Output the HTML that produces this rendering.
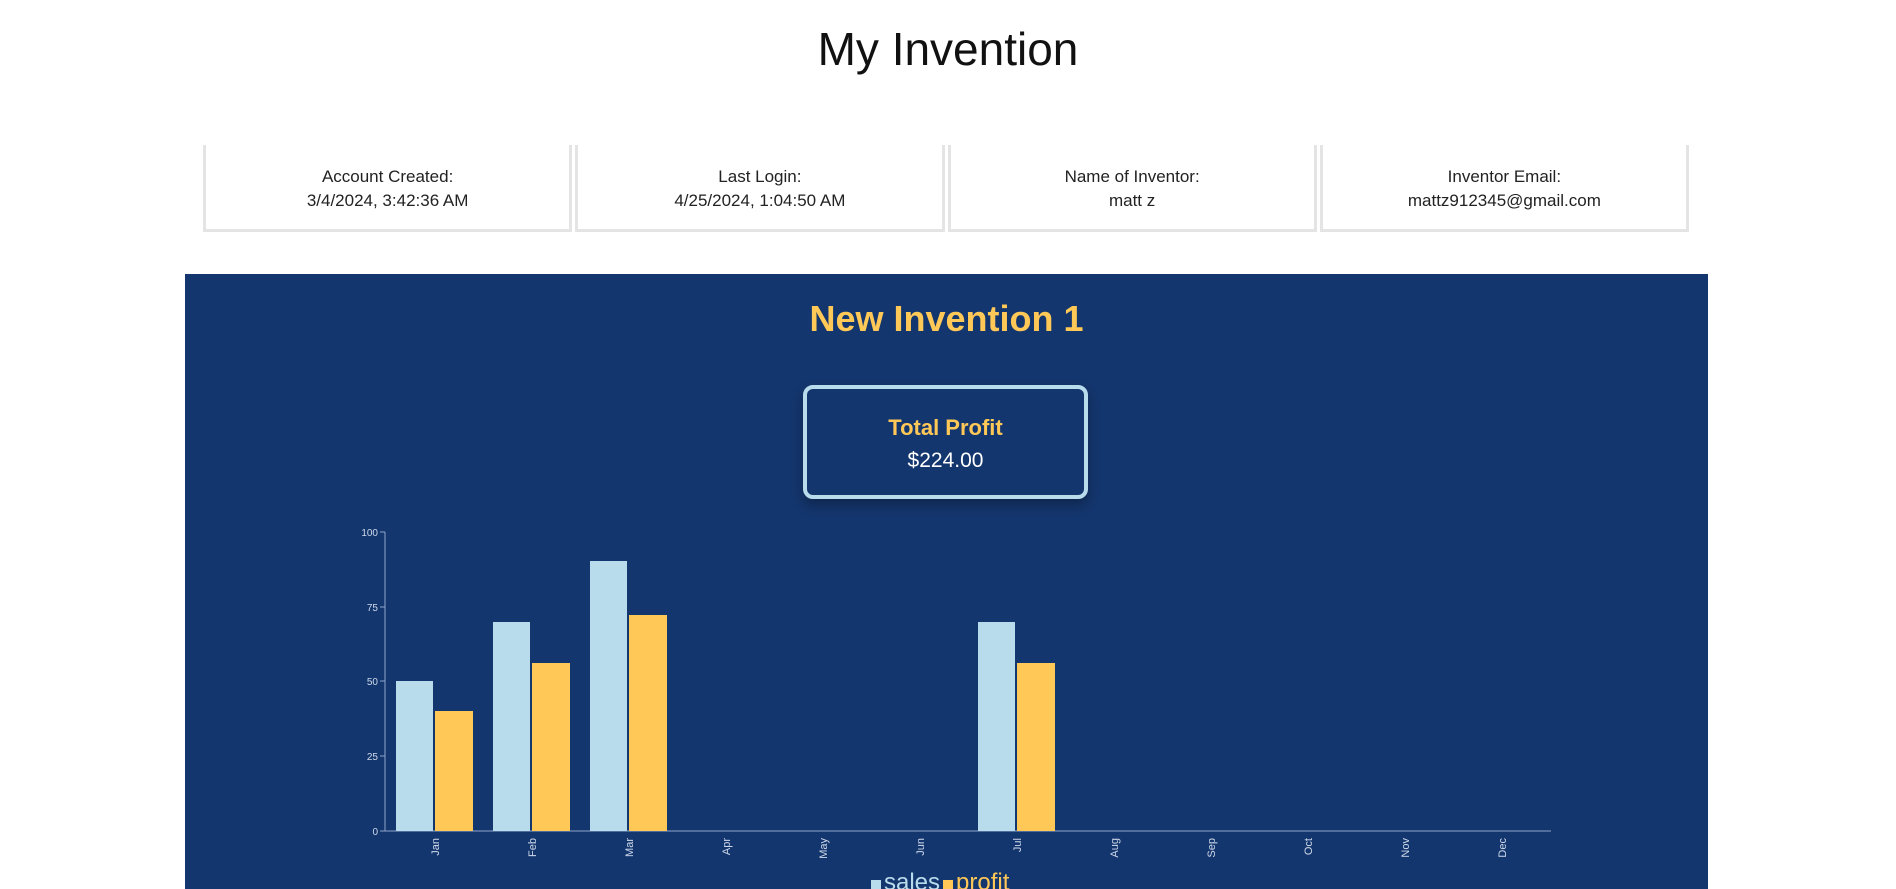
<!DOCTYPE html>
<html><head><style>
body{margin:0;width:1896px;height:889px;overflow:hidden;background:#fff;font-family:"Liberation Sans",sans-serif;position:relative}
h1{position:absolute;top:22px;left:0;width:1896px;text-align:center;font-weight:400;font-size:46px;margin:0;color:#111}
.cards{position:absolute;left:203px;top:145px;width:1486px;height:87px;display:flex}
.card{flex:1;border:3px solid #e4e4e4;border-top:none;text-align:center;font-size:17px;color:#222;padding-top:20px;line-height:24px;box-sizing:border-box;margin-right:3px}
.card:last-child{margin-right:0}
.panel{position:absolute;left:185px;top:274px;width:1523px;height:615px;background:#14366e}
.t{position:absolute;top:24px;width:100%;text-align:center;color:#ffc857;font-weight:bold;font-size:36px}
.box{position:absolute;left:618px;top:111px;width:285px;height:114px;border:4px solid #b8dcec;border-radius:10px;box-sizing:border-box;text-align:center;box-shadow:0 6px 12px rgba(0,0,0,.3)}
.box .a{color:#ffc857;font-weight:bold;font-size:22px;margin-top:26px}
.box .b{color:#fff;font-size:21px;margin-top:8px}
svg{position:absolute;left:0;top:0}
</style></head><body>
<h1>My Invention</h1>
<div class="cards">
<div class="card">Account Created:<br>3/4/2024, 3:42:36 AM</div>
<div class="card">Last Login:<br>4/25/2024, 1:04:50 AM</div>
<div class="card">Name of Inventor:<br>matt z</div>
<div class="card">Inventor Email:<br>mattz912345@gmail.com</div>
</div>
<div class="panel">
<div class="t">New Invention 1</div>
<div class="box"><div class="a">Total Profit</div><div class="b">$224.00</div></div>
</div>
<svg width="1896" height="889" font-family="Liberation Sans, sans-serif">
<g stroke="#8ea4c8" stroke-width="1" fill="none">
<line x1="385" y1="532" x2="385" y2="831"/>
<line x1="385" y1="831" x2="1551" y2="831"/>
<line x1="380" y1="532" x2="385" y2="532"/><line x1="380" y1="607" x2="385" y2="607"/><line x1="380" y1="681" x2="385" y2="681"/><line x1="380" y1="756" x2="385" y2="756"/><line x1="380" y1="831" x2="385" y2="831"/>
</g>
<g fill="#cfd9ea" font-size="10" text-anchor="end">
<text x="378" y="536">100</text><text x="378" y="611">75</text><text x="378" y="685">50</text><text x="378" y="760">25</text><text x="378" y="835">0</text>
</g>
<g fill="#b8dcec">
<rect x="396" y="681" width="37" height="150"/>
<rect x="493" y="622" width="37" height="209"/>
<rect x="590" y="561" width="37" height="270"/>
<rect x="978" y="622" width="37" height="209"/>
</g>
<g fill="#ffc857">
<rect x="435" y="711" width="38" height="120"/>
<rect x="532" y="663" width="38" height="168"/>
<rect x="629" y="615" width="38" height="216"/>
<rect x="1017" y="663" width="38" height="168"/>
</g>
<g fill="#cfd9ea" font-size="11" text-anchor="end">
<text transform="translate(439,838) rotate(-90)">Jan</text>
<text transform="translate(536,838) rotate(-90)">Feb</text>
<text transform="translate(633,838) rotate(-90)">Mar</text>
<text transform="translate(730,838) rotate(-90)">Apr</text>
<text transform="translate(827,838) rotate(-90)">May</text>
<text transform="translate(924,838) rotate(-90)">Jun</text>
<text transform="translate(1021,838) rotate(-90)">Jul</text>
<text transform="translate(1118,838) rotate(-90)">Aug</text>
<text transform="translate(1215,838) rotate(-90)">Sep</text>
<text transform="translate(1312,838) rotate(-90)">Oct</text>
<text transform="translate(1409,838) rotate(-90)">Nov</text>
<text transform="translate(1506,838) rotate(-90)">Dec</text>
</g>
<rect x="871" y="880" width="10" height="10" fill="#b8dcec"/>
<text x="884" y="890" font-size="24" fill="#b8dcec">sales</text>
<rect x="943" y="880" width="10" height="10" fill="#ffc857"/>
<text x="956" y="890" font-size="24" fill="#ffc857">profit</text>
</svg>
</body></html>
